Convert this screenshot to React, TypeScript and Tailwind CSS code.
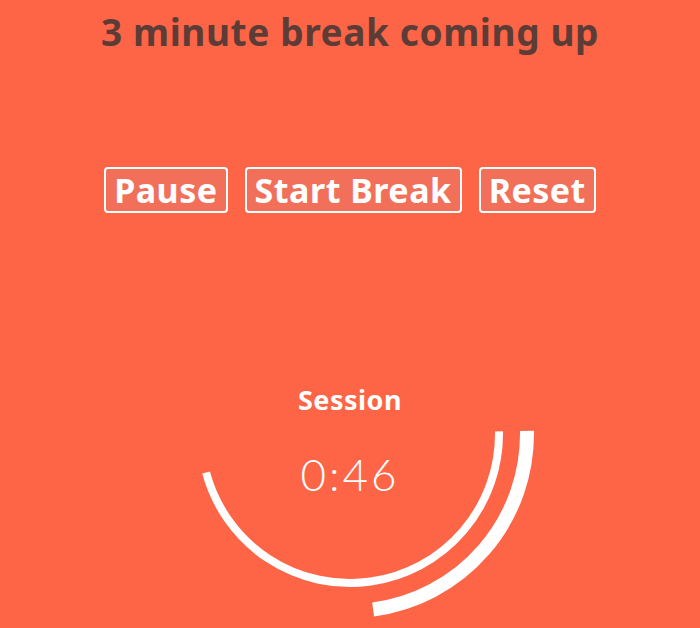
import React from "react";

export default function App() {
  const cx = 200;
  const cy = 64;
  const pt = (r: number, deg: number) => {
    const a = (deg * Math.PI) / 180;
    return [cx + r * Math.cos(a), cy + r * Math.sin(a)];
  };
  const [ix1, iy1] = pt(149, -1);
  const [ix2, iy2] = pt(149, 165);
  const [ox1, oy1] = pt(177, -1);
  const [ox2, oy2] = pt(177, 82.5);
  return (
    <div
      className="w-[700px] h-[628px] bg-[#fe6446] overflow-hidden flex flex-col items-center"
      style={{ fontFamily: '"Noto Sans", "Lato", sans-serif' }}
    >
      <h1 className="mt-[6px] text-[37px] leading-[52px] font-bold text-[#5b3c36] tracking-[0.6px]">
        3 minute break coming up
      </h1>
      <div className="mt-[109px] flex gap-[17px]">
        <button className="h-[46px] px-[8px] border-2 border-white rounded-[4px] bg-[#f2705a] text-white text-[34px] tracking-[0.5px] font-bold leading-none">
          Pause
        </button>
        <button className="h-[46px] px-[8px] border-2 border-white rounded-[4px] bg-[#f2705a] text-white text-[34px] tracking-[0.5px] font-bold leading-none">
          Start Break
        </button>
        <button className="h-[46px] px-[8px] border-2 border-white rounded-[4px] bg-[#f2705a] text-white text-[34px] tracking-[0.5px] font-bold leading-none">
          Reset
        </button>
      </div>
      <div className="relative mt-[157px] w-[400px] h-[258px] flex flex-col items-center">
        <svg className="absolute inset-0" width="400" height="258" viewBox="0 0 400 258">
          <path
            d={`M ${ix1} ${iy1} A 149 149 0 0 1 ${ix2} ${iy2}`}
            fill="none"
            stroke="#ffffff"
            strokeWidth="8"
          />
          <path
            d={`M ${ox1} ${oy1} A 177 177 0 0 1 ${ox2} ${oy2}`}
            fill="none"
            stroke="#ffffff"
            strokeWidth="14"
          />
        </svg>
        <div className="relative mt-[15px] text-white text-[27px] tracking-[0.5px] font-bold leading-[30px]">
          Session
        </div>
        <div
          className="relative mt-[34px] text-white text-[44px] tracking-[3px] font-light leading-[50px]"
          style={{ fontFamily: '"Lato", sans-serif' }}
        >
          0:46
        </div>
      </div>
    </div>
  );
}
